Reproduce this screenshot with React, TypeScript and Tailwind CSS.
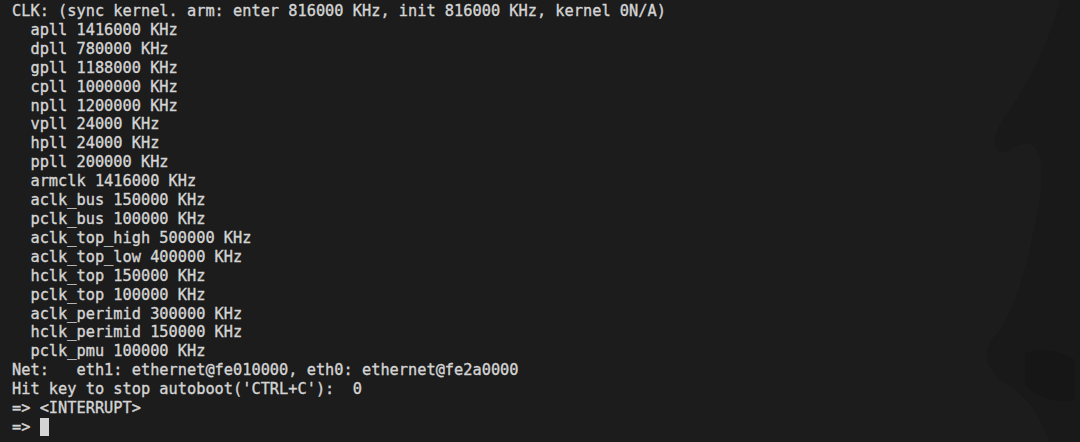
import React from "react";

const lines = [
  "CLK: (sync kernel. arm: enter 816000 KHz, init 816000 KHz, kernel 0N/A)",
  "  apll 1416000 KHz",
  "  dpll 780000 KHz",
  "  gpll 1188000 KHz",
  "  cpll 1000000 KHz",
  "  npll 1200000 KHz",
  "  vpll 24000 KHz",
  "  hpll 24000 KHz",
  "  ppll 200000 KHz",
  "  armclk 1416000 KHz",
  "  aclk_bus 150000 KHz",
  "  pclk_bus 100000 KHz",
  "  aclk_top_high 500000 KHz",
  "  aclk_top_low 400000 KHz",
  "  hclk_top 150000 KHz",
  "  pclk_top 100000 KHz",
  "  aclk_perimid 300000 KHz",
  "  hclk_perimid 150000 KHz",
  "  pclk_pmu 100000 KHz",
  "Net:   eth1: ethernet@fe010000, eth0: ethernet@fe2a0000",
  "Hit key to stop autoboot('CTRL+C'):  0",
  "=> <INTERRUPT>",
];

export default function App() {
  return (
    <div className="relative w-[1080px] h-[442px] overflow-hidden bg-[#1c1c1c]">
      <svg
        className="absolute right-0 top-0"
        width="140"
        height="442"
        viewBox="0 0 140 442"
      >
        <path
          d="M120 0 L140 0 L140 442 L110 442 C100 420 95 400 60 380 C45 365 40 350 60 330 C80 300 90 250 100 200 C105 160 100 130 70 150 C55 160 45 140 70 110 C90 80 110 40 120 0 Z"
          fill="#171717"
          opacity="0.6"
        />
        <path
          d="M85 355 C95 345 120 350 135 360 L135 400 C115 405 95 395 85 385 Z"
          fill="#131313"
          opacity="0.5"
        />
      </svg>
      <div
        className="relative pl-[12px] pt-[2px] text-[15.3px] leading-[18.9px] text-[#d4d4d4] whitespace-pre [-webkit-text-stroke:0.35px_#d4d4d4]"
        style={{ fontFamily: '"DejaVu Sans Mono", "Liberation Mono", monospace' }}
      >
        {lines.map((l, i) => (
          <div key={i}>{l}</div>
        ))}
        <div className="flex items-center">
          <span>{"=> "}</span>
          <span className="inline-block w-[9px] h-[18px] bg-[#d4d4d4]" />
        </div>
      </div>
    </div>
  );
}
